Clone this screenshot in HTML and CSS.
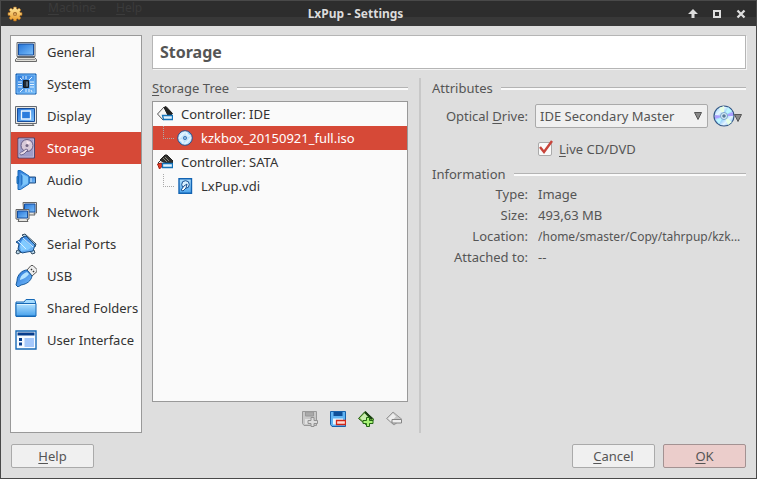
FILE: index.html
```html
<!DOCTYPE html>
<html lang="en">
<head>
<meta charset="utf-8">
<title>LxPup - Settings</title>
<link rel="stylesheet" href="styles.css">
</head>
<body>
<svg class="defs" aria-hidden="true">
  <defs>
    <linearGradient id="blue" x1="0" y1="0" x2="1" y2="1"><stop offset="0" stop-color="#2474d8"/><stop offset="1" stop-color="#7cc0fb"/></linearGradient>
    <linearGradient id="sky" x1="0" y1="0" x2="0" y2="1"><stop offset="0" stop-color="#b4e2ff"/><stop offset="1" stop-color="#48a2ec"/></linearGradient>
    <linearGradient id="disc" x1="0" y1="0" x2="1" y2="1"><stop offset="0" stop-color="#8cc8ff"/><stop offset=".3" stop-color="#e6f6ff"/><stop offset=".5" stop-color="#7fc4fa"/><stop offset=".7" stop-color="#e4f4ff"/><stop offset="1" stop-color="#59a6ef"/></linearGradient>
    <linearGradient id="gold" x1="0" y1="0" x2="0" y2="1"><stop offset="0" stop-color="#ffe9a0"/><stop offset="1" stop-color="#e89a28"/></linearGradient>
  </defs>
</svg>
<div class="window">
  <header class="titlebar">
    <svg class="app-icon" viewBox="0 0 16 16" aria-hidden="true"><g fill="url(#gold)" stroke="#a8641a" stroke-width=".6"><path d="M6.700 1h2.600l.3 1.800 1 .4 1.500-1.100 1.800 1.800-1.100 1.500.4 1 1.800.3v2.600l-1.800.3-.4 1 1.100 1.500-1.800 1.800-1.500-1.100-1 .4-.3 1.800H6.700l-.3-1.800-1-.4-1.500 1.100-1.800-1.800 1.100-1.500-.4-1L1 9.300V6.700l1.800-.3.4-1-1.100-1.500 1.800-1.800 1.500 1.100 1-.4z"/></g><circle cx="8" cy="8" r="2" fill="#9c6224"/><circle cx="8" cy="8.300" r="1.200" fill="#d5a158"/></svg>
    <div class="ghost-menu"><span><u>M</u>achine</span><span><u>H</u>elp</span></div>
    <h1>LxPup - Settings</h1>
    <div class="window-controls">
      <button type="button" aria-label="Shade"><svg viewBox="0 0 10 10"><path d="M5 0 10 5H6.500V9h-3V5H0z" fill="#ddd"/></svg></button>
      <button type="button" aria-label="Maximize"><svg viewBox="0 0 10 10"><path d="M2 2h6v6H2z" fill="none" stroke="#ddd" stroke-width="2"/></svg></button>
      <button type="button" aria-label="Close"><svg viewBox="0 0 10 10"><path d="M1.500 1.500 8.500 8.500M8.500 1.500 1.500 8.500" stroke="#ddd" stroke-width="2.300"/></svg></button>
    </div>
  </header>

  <div class="content">
    <nav class="sidebar" aria-label="Categories">
      <button type="button"><svg viewBox="0 0 22 22"><path d="M2 1.500h18v14H2z" fill="#e8e8e4" stroke="#646a72"/><path d="M3.500 3h15v11h-15z" fill="url(#blue)" stroke="#174d9c"/><path d="M2.500 16.500h17l2 2v2H.5v-2z" fill="#deddd7" stroke="#696969"/><path d="M2 18.500h18" stroke="#999"/></svg>General</button>
      <button type="button"><svg viewBox="0 0 22 22"><path d="M1 1h20v20H1z" fill="url(#blue)" stroke="#0d59ac"/><path d="M2 2h18v18H2z" fill="none" stroke="#8bccff" stroke-width=".7"/><path d="M3 9h4M3 11.500h4M3 14h4M15 9h4M15 11.500h4M15 14h4M8 3v3M11 3v3M17 4l-3 3M5 5l2 2M5 19l3-3M11 16v3M14 16v3M17 19l-1-2" stroke="#e6f5ff" stroke-width="1"/><path d="M8.500 7.500h5v7h-5z" fill="#222b34" stroke="#101820"/><path d="M11 8.500h2v5h-2z" fill="#596b7a"/></svg>System</button>
      <button type="button"><svg viewBox="0 0 22 22"><path d="M5 18.500h12l2 2H3z" fill="#ddd" stroke="#666"/><path d="M.5 1.500h21v17H.5z" fill="#e8e8e4" stroke="#646a72"/><path d="M2.500 3.500h17v13h-17z" fill="url(#blue)" stroke="#174d9c"/><path d="M6.500 6h9v8h-9z" fill="#2d7ddd" stroke="#eef8ff" stroke-width="1.300"/></svg>Display</button>
      <button type="button" class="selected" aria-current="page"><svg viewBox="0 0 22 22"><path d="M3 1h16.500v20H3z" fill="#9d9cc8" stroke="#4d4770"/><path d="M4 2h14.500v18H4z" fill="none" stroke="#c8bddc" stroke-width=".8"/><circle cx="12" cy="8.500" r="6" fill="#d9cad9" stroke="#675c84"/><path d="m12 8.500-.5-5 4 2z" fill="#f8e5ed"/><circle cx="12" cy="8.500" r="1.500" fill="#746784"/><path d="M6 18c-2-1-1-3 1-3l4-3 2 1-4 4z" fill="#eadee9" stroke="#5d5580" stroke-width=".8"/></svg>Storage</button>
      <button type="button"><svg viewBox="0 0 22 22"><path d="M13 8h7.500v6H13z" fill="url(#blue)" stroke="#244f80"/><path d="M3 1.500h2.500L14 7v8l-8.500 5.500H3z" fill="url(#blue)" stroke="#1769b6"/><path d="M5.500 4v14L13 14V8z" fill="#7dc7fb"/><path d="M5.500 4v14l2-3V7z" fill="#2876ca"/><path d="M2 7.500h1.500v7H2z" fill="#2c80cc" stroke="#1769b6"/><path d="M16 9v4" stroke="#d5efff"/></svg>Audio</button>
      <button type="button"><svg viewBox="0 0 22 22"><path d="M8 1.500h13.500V12H19l1 2H9z" fill="#e4e4e0" stroke="#666"/><path d="M9.500 3H20v8H9.500z" fill="url(#blue)" stroke="#174d9c"/><path d="M1 8.500h13V18l-2 .5 1 2H3l1-2-3-.5z" fill="#e4e4e0" stroke="#666"/><path d="M2.500 10h10v7h-10z" fill="url(#blue)" stroke="#174d9c"/></svg>Network</button>
      <button type="button"><svg viewBox="0 0 22 22"><path d="m7 2 3-1 11 10-1 3zM2 17l-1 3 2 1 3-2zM15 18l2 3 3-1-1-3z" fill="#bad9eb" stroke="#344b60"/><path d="m6 5 5-2 9 9-2 6-6 1-5 1-4-4 1-5-3-2 4-2z" fill="url(#blue)" stroke="#174d85"/><path d="m8 6 9 8-4 3-7 1-1-4 1-5z" fill="#81caff"/><path d="m3 8 8 8m-3-11 10 9" stroke="#d8f1ff"/></svg>Serial Ports</button>
      <button type="button"><svg viewBox="0 0 22 22"><path d="m12 5 4-4.500h2l4 4v2l-5 4.500z" fill="#eee" stroke="#555"/><path d="m16 4 1 1m1 1 1 1" stroke="#333" stroke-width="1.500"/><path d="M2 16c0-6 5-11 10-11l5 6c-1 5-5 8-11 9l-3 2-2-2z" fill="url(#blue)" stroke="#175b9c"/><path d="M5 14c1-4 4-6 7-7l2 2c-2 3-5 5-9 6z" fill="#b2e3ff"/></svg>USB</button>
      <button type="button"><svg viewBox="0 0 22 22"><path d="M1 5h8l2-2.500h8.500l1 2.500v14.500H1z" fill="#a4dbff" stroke="#1769b6"/><path d="M1 6.500h20V19H1z" fill="url(#sky)" stroke="#1769b6"/><path d="M2 7.500h18" stroke="#dff4ff"/></svg>Shared Folders</button>
      <button type="button"><svg viewBox="0 0 22 22"><path d="M1 2h20v18H1z" fill="#f7fbff" stroke="#1769b6" stroke-width="1.400"/><path d="M2.500 3.500h17v3h-17z" fill="#073d8d"/><path d="M4 9h3v3H4zM4 13.500h3v3H4z" fill="#073d8d"/><path d="M9.500 9H19v9H9.500z" fill="#a5c8fb"/></svg>User Interface</button>
    </nav>

    <main>
      <h2 class="page-title">Storage</h2>
      <div class="panes">
        <section class="tree-pane">
          <h3><span><u>S</u>torage Tree</span></h3>
          <ul class="tree">
            <li>
              <div class="row"><svg viewBox="0 0 16 16"><path d="m.5 8 6.500-7 4 5v4l-5 4z" fill="#f5f5f5" stroke="#555"/><path d="m7 1.500 2-1 6.500 7-1.500 1.500-3 .5z" fill="#222" stroke="#222"/><path d="M5.500 9.500h10v4h-9z" fill="#dff2ff" stroke="#1472b8" stroke-width="1.300"/></svg>Controller: IDE</div>
              <ul><li><div class="row selected"><svg viewBox="0 0 16 16"><circle cx="8" cy="8" r="7.300" fill="url(#disc)" stroke="#244f8c"/><path d="m8 8 1-6 5 4zM8 8l-2 6-4-4z" fill="#fff" opacity=".7"/><circle cx="8" cy="8" r="2.500" fill="#2c6fb8" stroke="#d5edff"/><circle cx="8" cy="8" r=".8" fill="#fff"/></svg>kzkbox_20150921_full.iso</div></li></ul>
            </li>
            <li>
              <div class="row"><svg viewBox="0 0 16 16"><path d="m1 9 7-7 6 6-2 3-7 2z" fill="#f2f2f2" stroke="#444"/><path d="m3 6 5-5h2l6 6v3l-4-1-6-1z" fill="#30302e" stroke="#222"/><path d="m6 4 4 4m-2-5 4 4" stroke="#88877c"/><path d="m.5 10 4-1 1 3-3 3z" fill="#ea3a25" stroke="#9a2116"/><path d="M5.500 9.500h10v4h-10z" fill="#dff2ff" stroke="#1472b8" stroke-width="1.300"/></svg>Controller: SATA</div>
              <ul><li><div class="row"><svg viewBox="0 0 16 16"><path d="M2 .7h12.500v14.600H2z" fill="url(#sky)" stroke="#1263b2" stroke-width="1.400"/><circle cx="8.500" cy="6.500" r="3.800" fill="#d7efff" stroke="#164f92"/><path d="m4 12 3-4 3-2-1 4-3 3z" fill="#f5fcff" stroke="#164f92"/></svg>LxPup.vdi</div></li></ul>
            </li>
          </ul>
          <div class="toolbar">
            <button type="button" aria-label="Add attachment" disabled><svg viewBox="0 0 16 16"><path d="M.5.500h14v14H2l-1.500-2z" fill="#c8c8c8" stroke="#999"/><path d="M3.500 1h8v4h-8z" fill="#aaa" stroke="#999"/><path d="M3 8h9v5H3z" fill="#e2e2e2"/><path d="M9 6.500h3v3h3.500v3H12v3H9v-3H6v-3h3z" fill="#ddd" stroke="#929292"/></svg></button>
            <button type="button" aria-label="Remove attachment"><svg viewBox="0 0 16 16"><path d="M.5.500h15v15H2l-1.500-2z" fill="#60b4f3" stroke="#1762ac"/><path d="M3.500 1h9v4h-9z" fill="#0d4f99"/><path d="M3 7.500h10v6H3z" fill="#e6f6ff"/><path d="M6.500 9.500h9v4h-9z" fill="#ffd8d1" stroke="#d12617" stroke-width="1.300"/></svg></button>
            <button type="button" aria-label="Add controller"><svg viewBox="0 0 16 16"><path d="m.5 7.500 6.500-7 9 8-7 6z" fill="#76b947" stroke="#275d16"/><path d="m2 7 5-5 3 4-4 5z" fill="#c9ecae"/><path d="m7 1 7 7" stroke="#193e12" stroke-width="2.200"/><path d="M8.500 6.500h3v3H15v3h-3.500v3h-3v-3H5v-3h3.500z" fill="#a8f276" stroke="#236814"/></svg></button>
            <button type="button" aria-label="Remove controller" disabled><svg viewBox="0 0 16 16"><path d="m.5 7.500 6.500-6.500 8.500 7-7.500 6z" fill="#c7c7c7" stroke="#999"/><path d="m2 7.500 5-5 3 3-5 5z" fill="#eee"/><path d="M6 8.500h9.500v3.500H6z" fill="#eee" stroke="#858585"/></svg></button>
          </div>
        </section>

        <section class="details">
          <h3><span>Attributes</span></h3>
          <div class="drive">
            <label for="drive">Optical <u>D</u>rive:</label>
            <span class="select-wrap">
              <select id="drive"><option>IDE Secondary Master</option></select>
              <svg viewBox="0 0 8 8" aria-hidden="true"><path d="M.5.500h7L4 7.500z" fill="#888" stroke="#555"/></svg>
            </span>
            <button type="button" class="disc-button" aria-label="Choose disk"><svg class="disc" viewBox="0 0 22 22"><circle cx="11" cy="11" r="10" fill="url(#disc)" stroke="#365987" stroke-width="1.200"/><path d="m11 11-5-8 5-2zM11 11l4 9 4-3z" fill="#e7ffe3"/><path d="m11 11 9-4v4zM11 11l-9 3v-4z" fill="#aa9fff"/><path d="m11 11 4-9 4 4zM11 11l-5 8-3-4z" fill="#bbf6ff"/><circle cx="11" cy="11" r="3.500" fill="#d9eefb" stroke="#7ba5cc"/><circle cx="11" cy="11" r="1.800" fill="#567995"/></svg><svg class="caret" viewBox="0 0 8 8"><path d="M.5.500h7L4 7.500z" fill="#888" stroke="#555"/></svg></button>
          </div>
          <div class="live">
            <input type="checkbox" id="live" checked>
            <label for="live"><u>L</u>ive CD/DVD</label>
            <svg class="tick" viewBox="0 0 16 16" aria-hidden="true"><path d="m2 7 4 5 8-11" fill="none" stroke="#c8453b" stroke-width="2.400"/></svg>
          </div>
          <h3><span>Information</span></h3>
          <dl>
            <dt>Type:</dt><dd>Image</dd>
            <dt>Size:</dt><dd>493,63 MB</dd>
            <dt>Location:</dt><dd class="path">/home/smaster/Copy/tahrpup/kzk...</dd>
            <dt>Attached to:</dt><dd>--</dd>
          </dl>
        </section>
      </div>
    </main>
  </div>

  <footer>
    <button type="button"><u>H</u>elp</button>
    <button type="button" class="cancel"><u>C</u>ancel</button>
    <button type="button" class="primary"><u>O</u>K</button>
  </footer>
</div>
</body>
</html>
```
FILE: styles.css
```css
* {
  box-sizing: border-box;
}

body {
  margin: 0;
  font: 13px/20px "Noto Sans", sans-serif;
  color: #555;
}

h1, h2, h3, ul, dl, dd {
  margin: 0;
  padding: 0;
  list-style: none;
}

button, select {
  font: inherit;
  color: inherit;
}

u {
  text-underline-offset: 2px;
  text-decoration-thickness: 1px;
  text-decoration-skip-ink: none;
}

svg {
  display: block;
  flex: none;
}

.defs {
  position: absolute;
  width: 0;
  height: 0;
}

.window {
  display: flex;
  flex-direction: column;
  min-height: 100vh;
  border: 1px solid #494949;
  border-top: 0;
  background: #dedede;
}

.titlebar {
  display: flex;
  align-items: center;
  position: relative;
  height: 26px;
  padding: 0 10px 0 6px;
  border-top: 1px solid #494949;
  background: linear-gradient(#2d2d2d 16px, #383838 16px);
}

.titlebar h1 {
  flex: 1;
  text-align: center;
  font-size: 12px;
  font-weight: 700;
  color: #dcdcdc;
}

.app-icon {
  width: 16px;
  height: 16px;
}

.ghost-menu {
  position: absolute;
  top: -1px;
  left: 47px;
  display: flex;
  gap: 20px;
  font-size: 12px;
  line-height: 16px;
  color: #3b3b3b;
}

.window-controls {
  display: flex;
  justify-content: flex-end;
  gap: 14px;
}

.window-controls button {
  width: 10px;
  height: 10px;
  padding: 0;
  border: 0;
  background: none;
}

.content {
  flex: 1;
  display: grid;
  grid-template-columns: 132px minmax(0, 1fr);
  gap: 10px;
  padding: 9px 10px 0 9px;
}

.sidebar {
  border: 1px solid #999;
  background: #fafafa;
}

.sidebar button {
  display: flex;
  align-items: center;
  gap: 10px;
  width: 100%;
  height: 32px;
  padding: 0 4px;
  border: 0;
  background: none;
  color: #333;
  white-space: nowrap;
}

.sidebar svg {
  width: 22px;
  height: 22px;
}

.sidebar .selected,
.row.selected {
  background: #d64937;
  color: #fff;
}

main {
  display: flex;
  flex-direction: column;
  gap: 9px;
}

.page-title {
  height: 34px;
  padding: 0 7px;
  border: 1px solid #b5b5b5;
  background: #fff;
  box-shadow: 1px 1px #f5f5f5;
  font-size: 16px;
  line-height: 32px;
}

.panes {
  flex: 1;
  display: grid;
  grid-template-columns: 256px minmax(0, 1fr);
  gap: 11px;
}

.tree-pane {
  display: flex;
  flex-direction: column;
}

h3 {
  display: flex;
  align-items: center;
  gap: 8px;
  font-size: 13px;
  font-weight: 400;
}

h3::after {
  content: "";
  flex: 1;
  height: 2px;
  border-top: 1px solid #b3b3b3;
  background: #fafafa;
}

.tree {
  flex: 1;
  margin-top: 3px;
  border: 1px solid #999;
  background: #fafafa;
  color: #333;
}

.row {
  display: flex;
  align-items: center;
  gap: 8px;
  height: 24px;
  padding-left: 4px;
}

.row svg {
  width: 16px;
  height: 16px;
}

.tree ul .row {
  padding-left: 10px;
}

.tree ul .row::before {
  content: "";
  align-self: flex-start;
  width: 10px;
  height: 12px;
  margin-right: -5px;
  border-left: 1px dotted #aaa;
  border-bottom: 1px dotted #aaa;
}

.toolbar {
  display: flex;
  justify-content: flex-end;
  gap: 12px;
  padding: 9px 6px 6px;
}

.toolbar button {
  width: 16px;
  height: 16px;
  padding: 0;
  border: 0;
  background: none;
}

.details {
  padding-left: 11px;
  border-left: 2px solid #c8c8c8;
}

.drive {
  display: grid;
  grid-template-columns: 96px minmax(0, 1fr) auto;
  align-items: center;
  column-gap: 7px;
  margin-top: 6px;
}

.drive label,
dt {
  text-align: right;
}

.select-wrap {
  display: grid;
  align-items: center;
}

.select-wrap > * {
  grid-area: 1 / 1;
}

.select-wrap svg {
  justify-self: end;
  width: 8px;
  height: 8px;
  margin-right: 6px;
  pointer-events: none;
}

select {
  appearance: none;
  width: 100%;
  height: 24px;
  padding: 0 4px;
  border: 1px solid #aaa;
  border-radius: 2px;
  background: #f0f0f0;
}

.disc-button {
  display: flex;
  align-items: center;
  margin-left: -2px;
  padding: 0 4px 0 0;
  border: 0;
  background: none;
}

.disc {
  width: 22px;
  height: 22px;
}

.caret {
  width: 8px;
  height: 8px;
  margin: 4px 0 0 -1px;
}

.live {
  display: flex;
  align-items: center;
  gap: 7px;
  position: relative;
  margin: 11px 0 5px;
  padding-left: 106px;
}

.live input {
  appearance: none;
  width: 14px;
  height: 14px;
  margin: 0;
  border: 1px solid #aaa;
  border-radius: 2px;
  background: #fafafa;
}

.tick {
  position: absolute;
  top: 1px;
  left: 106px;
  width: 16px;
  height: 16px;
  pointer-events: none;
}

dl {
  display: grid;
  grid-template-columns: 96px minmax(0, 1fr);
  column-gap: 10px;
  line-height: 21px;
}

dd {
  overflow: hidden;
  white-space: nowrap;
}

.path {
  font-size: 12px;
}

footer {
  display: flex;
  gap: 8px;
  padding: 11px 10px 10px;
}

footer button {
  width: 83px;
  height: 24px;
  padding: 0;
  border: 1px solid #aaa;
  border-radius: 2px;
  background: #f0f0f0;
}

.cancel {
  margin-left: auto;
}

footer .primary {
  border-color: #a39292;
  background: #ebcdcb;
}
```
